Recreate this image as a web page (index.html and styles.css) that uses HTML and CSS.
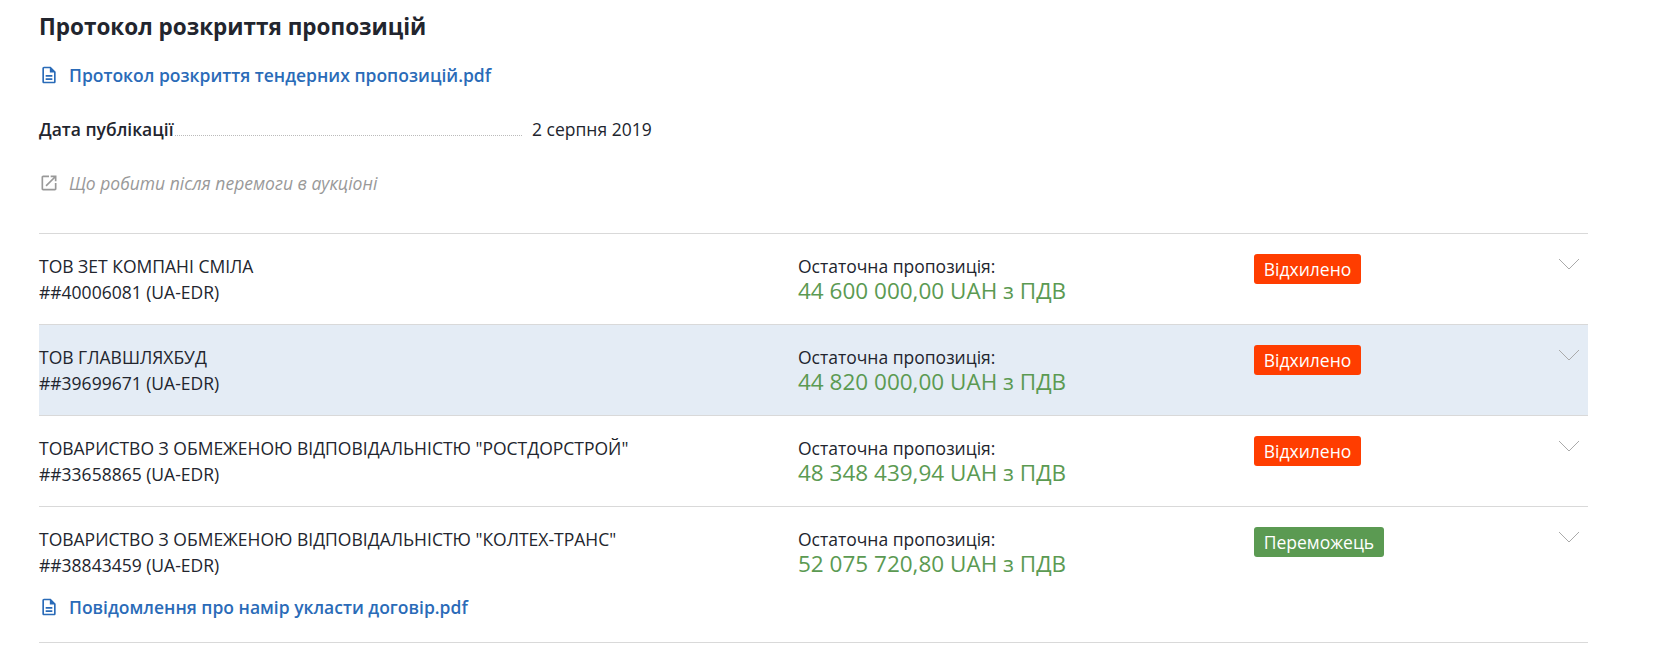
FILE: index.html
```html
<!DOCTYPE html>
<html lang="en">
<head>
  <meta charset="UTF-8">
  <meta name="viewport" content="width=device-width, initial-scale=1.0">
  <title>Протокол розкриття пропозицій</title>
  <link rel="stylesheet" href="styles.css">
</head>
<body>
  <div class="container">
    <h2 class="title">Протокол розкриття пропозицій</h2>

    <a class="doc_link top_link" href="#">
      <svg class="icon" viewBox="0 0 24 24"><path d="M14 2H6c-1.1 0-2 .9-2 2v16c0 1.1.9 2 2 2h12c1.1 0 2-.9 2-2V8l-6-6zm4 18H6V4h7v5h5v11zM8 12h8v2H8zM8 16h8v2H8z"/></svg>
      Протокол розкриття тендерних пропозицій.pdf
    </a>

    <div class="date_row">
      <div class="date_label"><span>Дата публікації</span></div>
      <div class="date_value">2 серпня 2019</div>
    </div>

    <a class="help_link" href="#">
      <svg class="icon_ext" viewBox="0 0 24 24"><path d="M19 19H5V5h7V3H5c-1.11 0-2 .9-2 2v14c0 1.1.89 2 2 2h14c1.1 0 2-.9 2-2v-7h-2v7zM14 3v2h3.59l-9.83 9.83 1.41 1.41L19 6.41V10h2V3h-7z"/></svg>
      Що робити після перемоги в аукціоні
    </a>

    <div class="bids">
      <div class="bid">
        <div class="bid_name">ТОВ ЗЕТ КОМПАНІ СМІЛА<br>##40006081 (UA-EDR)</div>
        <div class="bid_offer">Остаточна пропозиція:<div class="amount">44 600 000,00 UAH з ПДВ</div></div>
        <div class="bid_status"><span class="badge rejected">Відхилено</span></div>
        <svg class="chevron" viewBox="0 0 22 12"><path d="M1 1l10 10L21 1"/></svg>
      </div>

      <div class="bid selected">
        <div class="bid_name">ТОВ ГЛАВШЛЯХБУД<br>##39699671 (UA-EDR)</div>
        <div class="bid_offer">Остаточна пропозиція:<div class="amount">44 820 000,00 UAH з ПДВ</div></div>
        <div class="bid_status"><span class="badge rejected">Відхилено</span></div>
        <svg class="chevron" viewBox="0 0 22 12"><path d="M1 1l10 10L21 1"/></svg>
      </div>

      <div class="bid">
        <div class="bid_name">ТОВАРИСТВО З ОБМЕЖЕНОЮ ВІДПОВІДАЛЬНІСТЮ "РОСТДОРСТРОЙ"<br>##33658865 (UA-EDR)</div>
        <div class="bid_offer">Остаточна пропозиція:<div class="amount">48 348 439,94 UAH з ПДВ</div></div>
        <div class="bid_status"><span class="badge rejected">Відхилено</span></div>
        <svg class="chevron" viewBox="0 0 22 12"><path d="M1 1l10 10L21 1"/></svg>
      </div>

      <div class="bid">
        <div class="bid_name">
          ТОВАРИСТВО З ОБМЕЖЕНОЮ ВІДПОВІДАЛЬНІСТЮ "КОЛТЕХ-ТРАНС"<br>##38843459 (UA-EDR)
          <a class="doc_link bid_link" href="#">
            <svg class="icon" viewBox="0 0 24 24"><path d="M14 2H6c-1.1 0-2 .9-2 2v16c0 1.1.9 2 2 2h12c1.1 0 2-.9 2-2V8l-6-6zm4 18H6V4h7v5h5v11zM8 12h8v2H8zM8 16h8v2H8z"/></svg>
            Повідомлення про намір укласти договір.pdf
          </a>
        </div>
        <div class="bid_offer">Остаточна пропозиція:<div class="amount">52 075 720,80 UAH з ПДВ</div></div>
        <div class="bid_status"><span class="badge winner">Переможець</span></div>
        <svg class="chevron" viewBox="0 0 22 12"><path d="M1 1l10 10L21 1"/></svg>
      </div>
    </div>
  </div>
</body>
</html>
```

FILE: styles.css
```css
body {
  margin: 0;
  background-color: #fff;
  font-family: 'Open Sans', sans-serif;
  font-size: 17.5px;
  color: #22252e;
}

a {
  text-decoration: none;
}

.container {
  width: 1549px;
  margin-left: 39px;
  padding-top: 10px;
}

.title {
  margin: 0;
  font-size: 22.5px;
  line-height: 34px;
  font-weight: 700;
}

.doc_link {
  display: flex;
  align-items: center;
  gap: 10px;
  line-height: 24px;
  font-weight: 600;
  color: #2a6bb8;
}

.top_link {
  margin-top: 19px;
}

.icon {
  width: 20px;
  height: 20px;
  fill: #2a6bb8;
  flex-shrink: 0;
}

.date_row {
  display: flex;
  margin-top: 30px;
  line-height: 24px;
}

.date_label {
  width: 483px;
  margin-right: 10px;
  height: 18px;
  border-bottom: 1px dotted #bbb;
}

.date_label span {
  background: #fff;
  font-weight: 600;
}

.help_link {
  display: flex;
  align-items: center;
  gap: 10px;
  margin-top: 30px;
  line-height: 24px;
  font-style: italic;
  color: #999;
}

.icon_ext {
  width: 20px;
  height: 20px;
  fill: #999;
  flex-shrink: 0;
}

.bids {
  margin-top: 38px;
  border-bottom: 1px solid #d9d9d9;
}

.bid {
  display: flex;
  align-items: flex-start;
  min-height: 90px;
  border-top: 1px solid #d9d9d9;
  line-height: 26px;
}

.bid.selected {
  background-color: #e4ecf5;
}

.bid_name {
  width: 759px;
  padding-top: 19px;
}

.bid_offer {
  width: 456px;
  padding-top: 19px;
}

.amount {
  font-size: 22.5px;
  line-height: 24px;
  color: #5b9a52;
}

.bid_status {
  width: 304px;
  padding-top: 20px;
}

.badge {
  display: inline-block;
  padding: 0 9.75px;
  border-radius: 3px;
  line-height: 30px;
  color: #fff;
}

.rejected {
  background-color: #ff3d00;
}

.winner {
  background-color: #5b9a52;
}

.chevron {
  width: 22px;
  height: 12px;
  margin-top: 24px;
  fill: none;
  stroke: #aaa;
  stroke-width: 1;
}

.bid_link {
  margin-top: 17px;
  margin-bottom: 23px;
}
```
